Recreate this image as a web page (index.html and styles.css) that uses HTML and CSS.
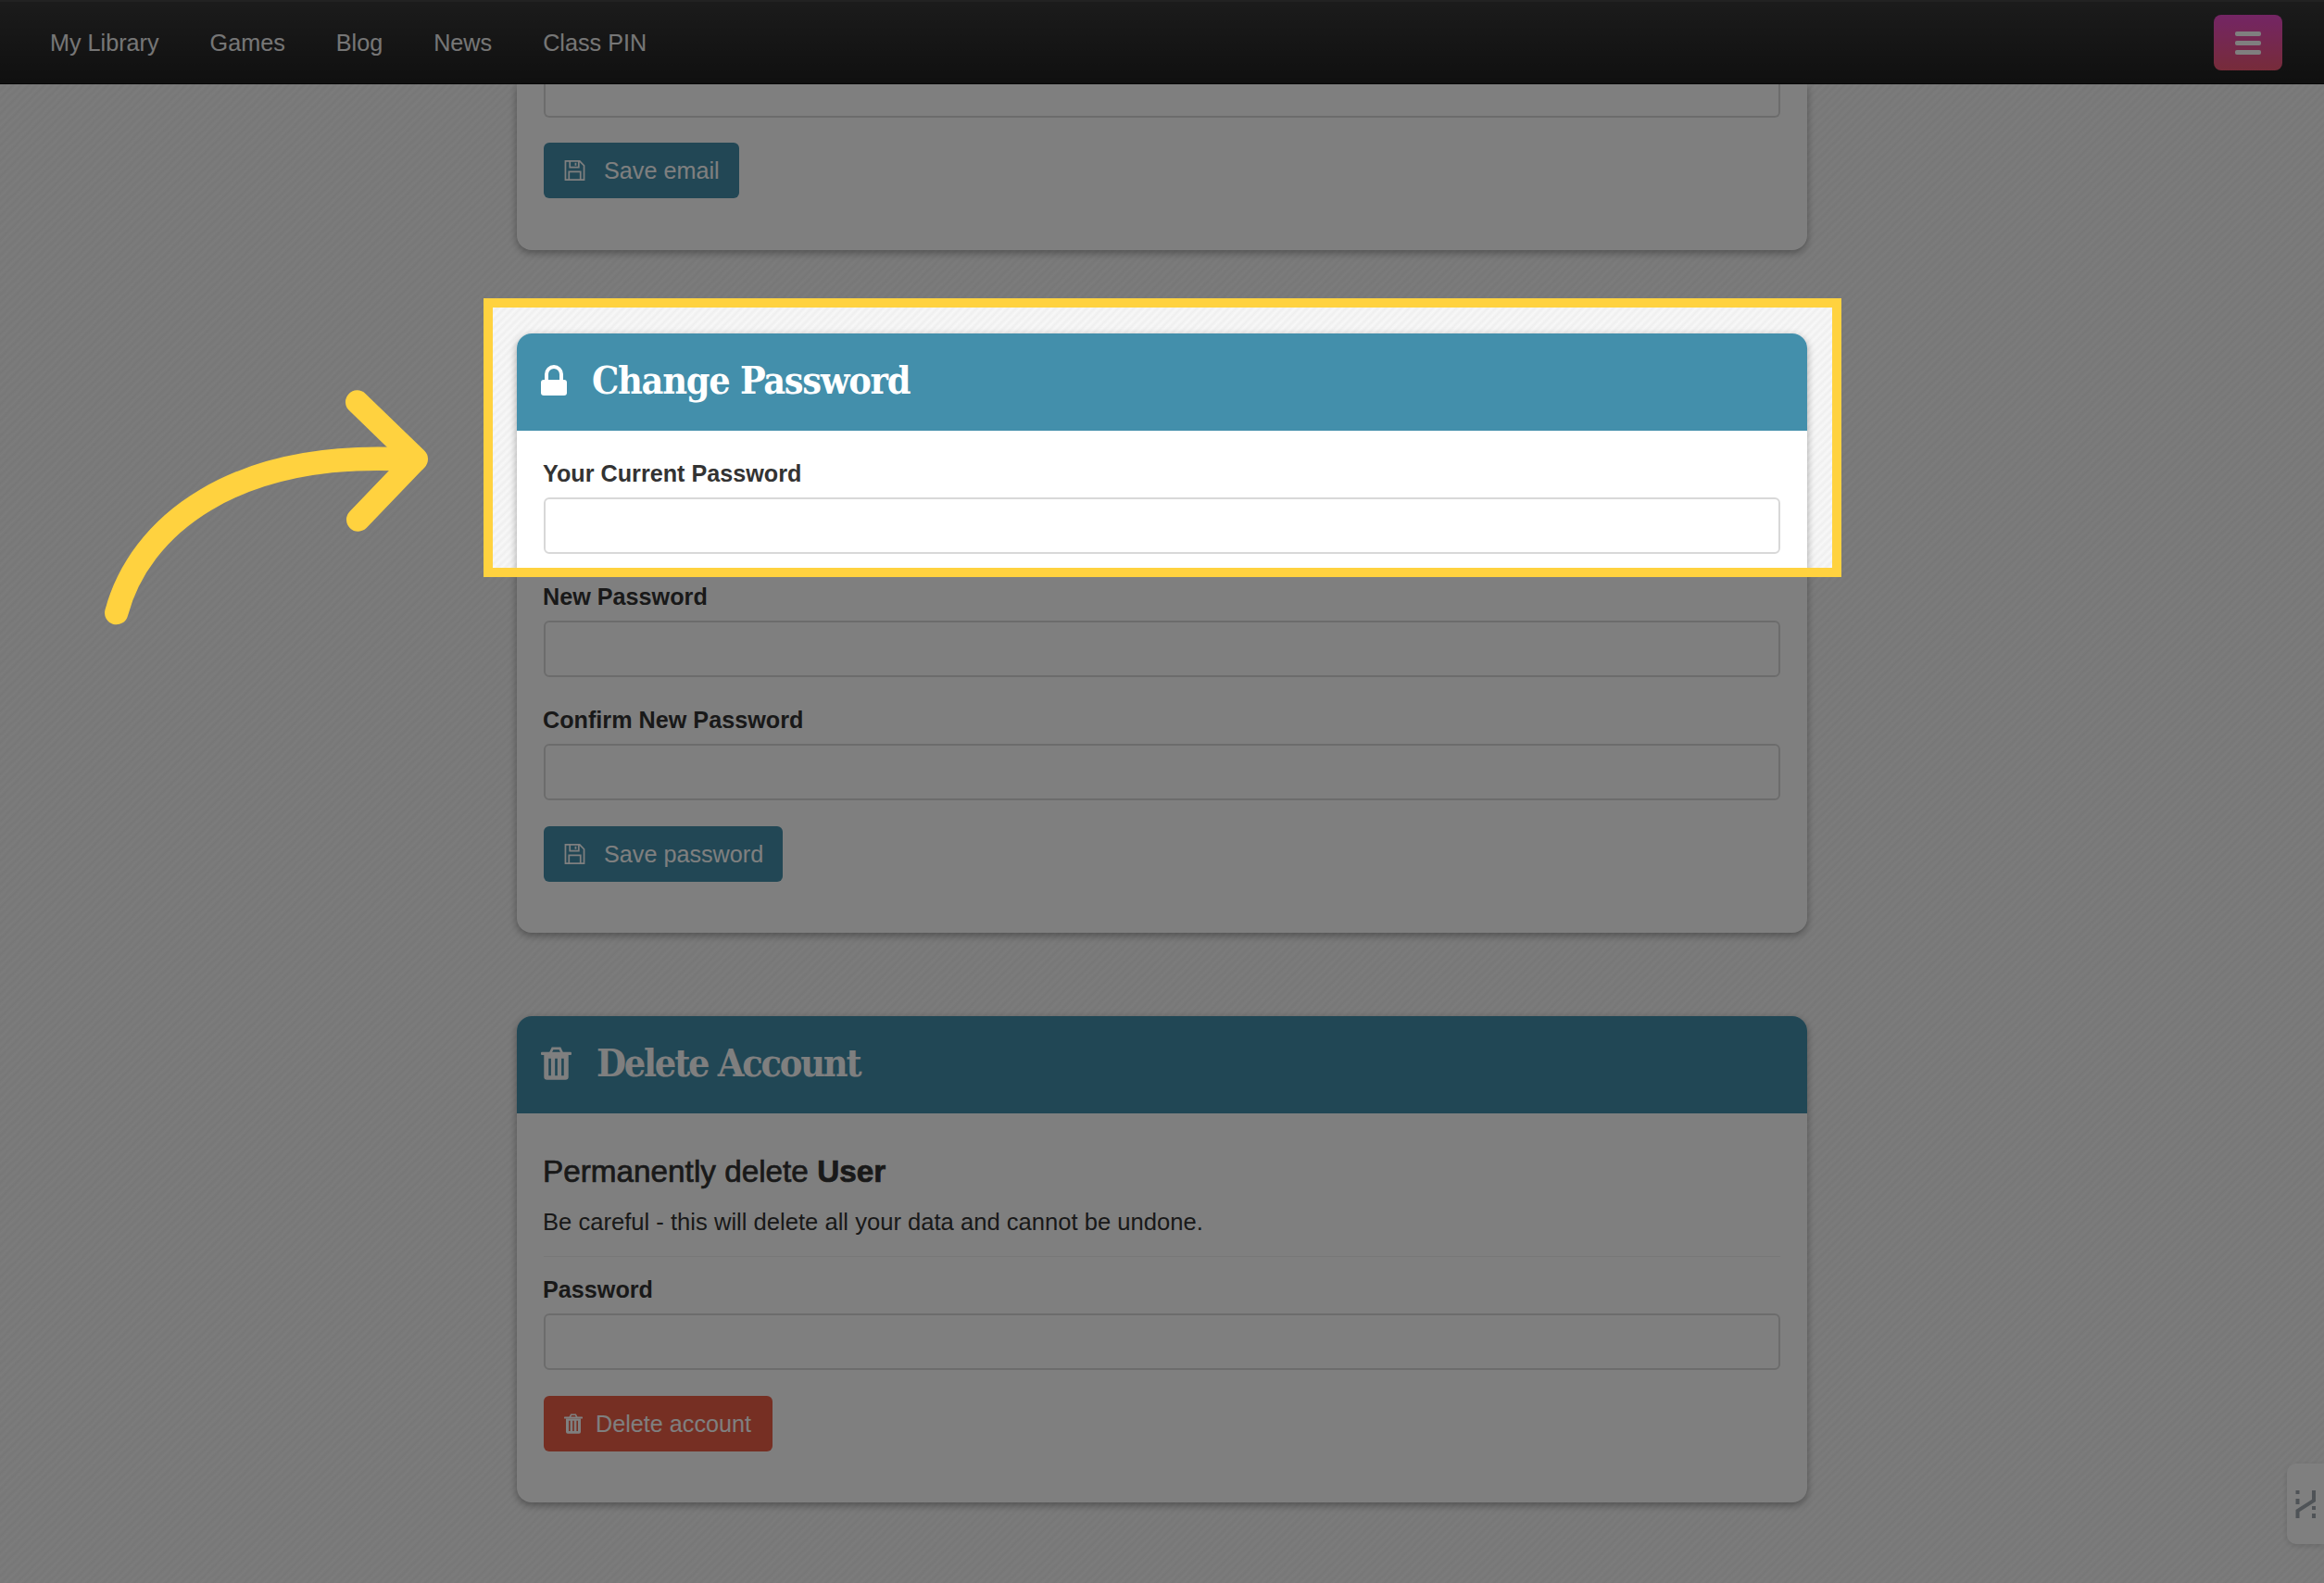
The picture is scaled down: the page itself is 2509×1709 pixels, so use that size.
FILE: index.html
```html
<!DOCTYPE html>
<html lang="en">
<head>
  <meta charset="UTF-8">
  <title>Account settings</title>
  <link rel="stylesheet" href="styles.css">
</head>
<body>
  <svg class="icon-defs" aria-hidden="true">
    <symbol id="icon-save" viewBox="0 0 23 23">
      <path d="M1 1h16l5 5v16H1z M6 1v7h10V1 M12.500 3v3 M5 22v-9h13v9" fill="none" stroke="currentColor" stroke-width="1.800"/>
    </symbol>
    <symbol id="icon-trash" viewBox="0 0 100 108">
      <path d="M31 20 38 5h24l7 15" fill="none" stroke="currentColor" stroke-width="8"/>
      <rect x="0" y="17" width="100" height="10" rx="3" fill="currentColor"/>
      <path fill-rule="evenodd" fill="currentColor" d="M10 27h80v71a10 10 0 0 1-10 10H20a10 10 0 0 1-10-10z M25 38v56h8V38z M46 38v56h8V38z M67 38v56h8V38z"/>
    </symbol>
  </svg>

  <nav class="navbar">
    <div class="nav-links">
      <a href="#">My Library</a>
      <a href="#">Games</a>
      <a href="#">Blog</a>
      <a href="#">News</a>
      <a href="#">Class PIN</a>
    </div>
    <button class="nav-toggle" type="button" aria-label="Menu">
      <span></span><span></span><span></span>
    </button>
  </nav>

  <main class="content">
    <!-- page is scrolled, only the bottom of this card is on screen -->
    <section class="card card-scrolled">
      <div class="input input-cut"></div>
      <a class="btn" href="#">
        <svg class="btn-icon"><use href="#icon-save"/></svg>
        Save email
      </a>
    </section>

    <section class="card">
      <h2 class="card-header">
        <svg class="header-lock" viewBox="0 0 28 33">
          <path d="M6 18V10a8 8 0 0 1 16 0v8" fill="none" stroke="currentColor" stroke-width="4"/>
          <rect y="16" width="28" height="17" rx="3" fill="currentColor"/>
        </svg>
        Change Password
      </h2>
      <div class="card-body">
        <div class="field">
          <label>Your Current Password</label>
          <input class="input" type="password">
        </div>
        <div class="field">
          <label>New Password</label>
          <input class="input" type="password">
        </div>
        <div class="field">
          <label>Confirm New Password</label>
          <input class="input" type="password">
        </div>
        <a class="btn" href="#">
          <svg class="btn-icon"><use href="#icon-save"/></svg>
          Save password
        </a>
      </div>
    </section>

    <section class="card">
      <h2 class="card-header card-header-delete">
        <svg class="header-trash"><use href="#icon-trash"/></svg>
        Delete Account
      </h2>
      <div class="card-body">
        <h3 class="delete-title">Permanently delete <b>User</b></h3>
        <p class="delete-text">Be careful - this will delete all your data and cannot be undone.</p>
        <hr class="divider">
        <div class="field">
          <label>Password</label>
          <input class="input" type="password">
        </div>
        <a class="btn btn-danger" href="#">
          <svg class="btn-icon-small"><use href="#icon-trash"/></svg>
          Delete account
        </a>
      </div>
    </section>
  </main>

  <aside class="side-tab">
    <svg viewBox="0 0 23 31" width="23" height="31">
      <path d="M2.500 0v4 M2.500 9v6 M2.500 30v-8L20 11V0 M20 17v4 M20 25v5" fill="none" stroke="#9ea6ae" stroke-width="4"/>
    </svg>
  </aside>

  <!-- dims the whole page except the box, box-shadow does the dimming -->
  <div class="spotlight"></div>

  <svg class="arrow" viewBox="0 0 1200 900">
    <path d="M107 785C180 510 480 250 1075 290" fill="none" stroke="#ffd23f" stroke-width="76" stroke-linecap="round"/>
    <path d="M887 102 1078 287 890 483" fill="none" stroke="#ffd23f" stroke-width="76" stroke-linecap="round" stroke-linejoin="round"/>
  </svg>
</body>
</html>
```

FILE: styles.css
```css
/* General */
html, body {
  height: 100%;
}

body {
  margin: 0;
  overflow: hidden;
  font-family: "Liberation Sans", Arial, sans-serif;
  font-size: 25.6px;
  color: #333;
  background-color: #f4f4f4;
  background-image: repeating-linear-gradient(135deg, #f8f8f8 0, #efefef 3px, #f8f8f8 6px);
}

.icon-defs {
  display: none;
}

/* Navbar */
.navbar {
  height: 91px;
  box-sizing: border-box;
  display: flex;
  align-items: center;
  justify-content: space-between;
  padding: 0 45px 0 54px;
  background: linear-gradient(#373737, #202020);
  border-top: 2px solid #444;
  border-bottom: 1px solid #111;
}

.nav-links {
  display: flex;
  gap: 55px;
  font-size: 25.2px;
}

.nav-links a {
  color: #ececec;
  text-decoration: none;
}

.nav-toggle {
  width: 74px;
  height: 60px;
  padding: 0;
  border: none;
  border-radius: 8px;
  display: flex;
  flex-direction: column;
  align-items: center;
  justify-content: center;
  gap: 5px;
  background: linear-gradient(#e84bc9, #ee5874);
}

.nav-toggle span {
  width: 28px;
  height: 5px;
  border-radius: 2px;
  background-color: #fff;
}

/* Cards */
.content {
  width: 1393px;
  margin: 0 auto;
}

.card {
  margin-bottom: 90px;
  background-color: #fff;
  border-radius: 16px;
  box-shadow: 0 3px 8px rgba(0,0,0,0.35);
}

.card-scrolled {
  padding: 0 29px 56px;
  border-radius: 0 0 16px 16px;
}

.card-header {
  height: 105px;
  margin: 0;
  padding: 0 0 3px 26px;
  box-sizing: border-box;
  display: flex;
  align-items: center;
  font-family: "DejaVu Serif Condensed", "DejaVu Serif", serif;
  font-size: 41px;
  font-weight: 700;
  letter-spacing: -1.3px;
  color: #fff;
  background-color: #438fab;
  border-radius: 16px 16px 0 0;
}

.card-header-delete {
  letter-spacing: -2.2px;
}

.header-lock {
  width: 28px;
  height: 33px;
  margin: -2px 27px 0 0;
}

.header-trash {
  width: 33px;
  height: 36px;
  margin-right: 27px;
}

.card-body {
  padding: 31px 29px 55px;
}

/* Form bits */
.field {
  margin-bottom: 31px;
}

.field label {
  display: block;
  height: 30px;
  line-height: 30px;
  margin-bottom: 11px;
  margin-left: -1px;
  font-size: 25.2px;
  font-weight: 700;
}

.input {
  display: block;
  box-sizing: border-box;
  width: 100%;
  height: 61px;
  background-color: #fff;
  border: 2px solid #d8d8d8;
  border-radius: 6px;
}

.input-cut {
  height: 36px;
  margin-bottom: 27px;
  border-top: none;
  border-radius: 0 0 6px 6px;
}

.field:last-of-type {
  margin-bottom: 28px;
}

.btn {
  display: inline-flex;
  align-items: center;
  height: 60px;
  padding: 0 21px 0 22px;
  font-size: 25.2px;
  color: #fff;
  text-decoration: none;
  background-color: #448fab;
  border-radius: 6px;
}

.btn-icon {
  width: 23px;
  height: 22px;
  margin-right: 20px;
}

.btn-danger {
  padding-right: 23px;
  background-color: #ec5e46;
}

.btn-icon-small {
  width: 20px;
  height: 22px;
  margin-right: 14px;
}

/* Delete account */
.delete-title {
  margin: 12px 0 19px -1px;
  font-size: 33.3px;
  line-height: 40px;
  font-weight: 400;
  -webkit-text-stroke: 0.7px #333;
}

.delete-text {
  margin: 0 0 0 -1px;
  line-height: 30px;
}

.divider {
  margin: 22px 0 20px;
  border: none;
  border-top: 1px solid #eee;
}

/* Overlays */
.side-tab {
  position: fixed;
  right: 0;
  top: 1580px;
  width: 40px;
  height: 87px;
  box-sizing: border-box;
  padding: 29px 0 0 9px;
  background-color: #fff;
  border-radius: 10px 0 0 10px;
  box-shadow: 0 2px 6px rgba(0,0,0,0.15);
}

.side-tab svg {
  display: block;
}

.spotlight {
  position: fixed;
  left: 522px;
  top: 322px;
  width: 1466px;
  height: 301px;
  box-sizing: border-box;
  border: 10px solid #ffd23f;
  box-shadow: 0 0 0 3000px rgba(0,0,0,0.5);
}

.arrow {
  position: fixed;
  left: 90px;
  top: 400px;
  width: 400px;
  height: 300px;
}
```
